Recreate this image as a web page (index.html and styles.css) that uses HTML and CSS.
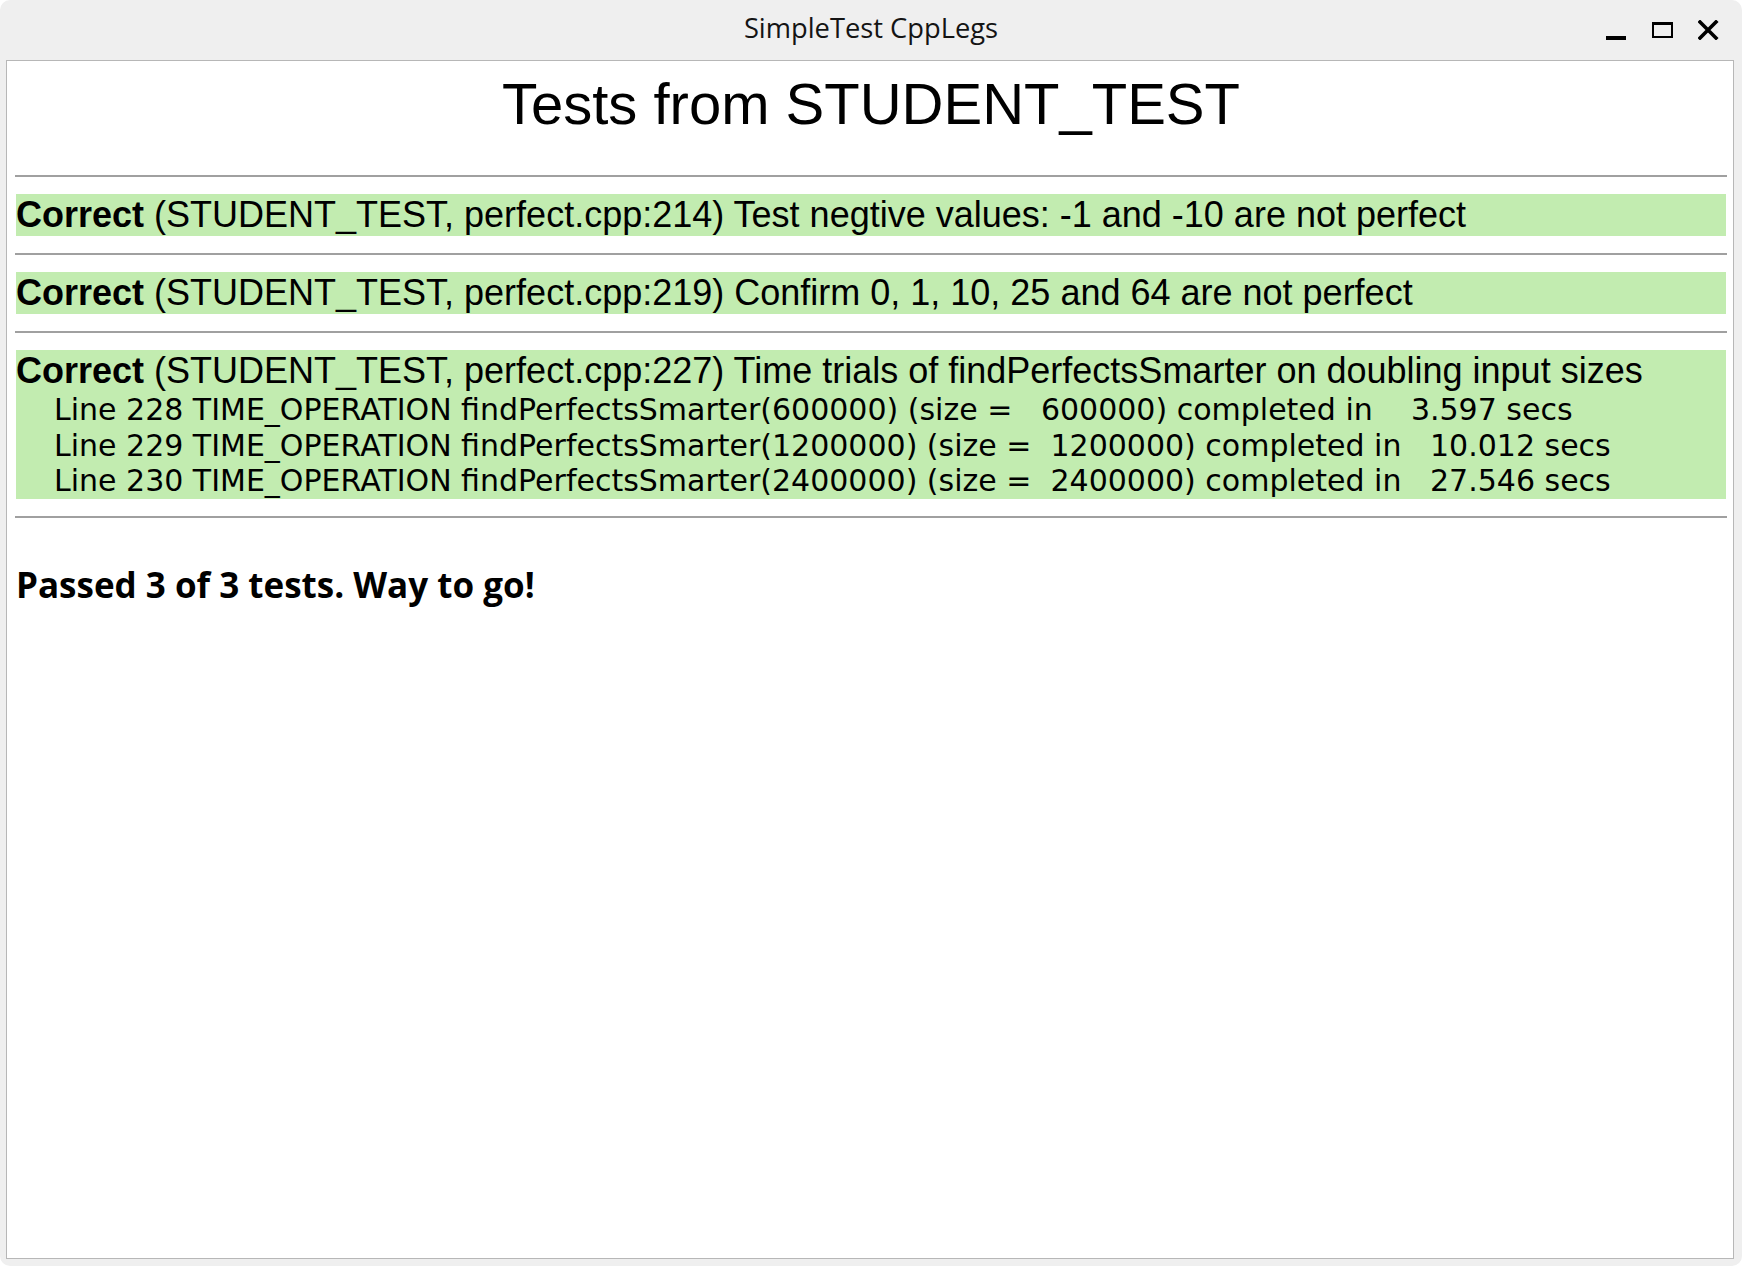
FILE: index.html
```html
<!DOCTYPE html>
<html lang="en">
<head>
<meta charset="utf-8">
<title>SimpleTest CppLegs</title>
<link rel="stylesheet" href="styles.css">
</head>
<body>
<div class="window">
  <header class="titlebar">
    <div class="spacer"></div>
    <div class="title">SimpleTest CppLegs</div>
    <div class="controls">
      <svg class="ctl" width="21" height="20" viewBox="0 0 21 20" aria-label="Minimize"><rect x="0" y="16" width="20" height="4" fill="#000"/></svg>
      <svg class="ctl" width="21" height="20" viewBox="0 0 21 20" aria-label="Maximize"><path d="M0 2h21v16H0z M2 5v11h17V5z" fill="#000" fill-rule="evenodd"/></svg>
      <svg class="ctl" width="21" height="20" viewBox="0 0 21 20" aria-label="Close"><path d="M2 2L18 18M18 2L2 18" stroke="#000" stroke-width="3.6" stroke-linecap="square" fill="none"/></svg>
    </div>
  </header>
  <main class="panel">
    <h1 class="heading">Tests from STUDENT_TEST</h1>
    <hr class="rule">
    <div class="result"><b>Correct</b> (STUDENT_TEST, perfect.cpp:214) Test negtive values: -1 and -10 are not perfect</div>
    <hr class="rule">
    <div class="result"><b>Correct</b> (STUDENT_TEST, perfect.cpp:219) Confirm 0, 1, 10, 25 and 64 are not perfect</div>
    <hr class="rule">
    <div class="result">
      <div class="result-head"><b>Correct</b> (STUDENT_TEST, perfect.cpp:227) Time trials of findPerfectsSmarter on doubling input sizes</div>
      <div class="detail">Line 228 TIME_OPERATION findPerfectsSmarter(600000) (size =   600000) completed in    3.597 secs</div>
      <div class="detail">Line 229 TIME_OPERATION findPerfectsSmarter(1200000) (size =  1200000) completed in   10.012 secs</div>
      <div class="detail">Line 230 TIME_OPERATION findPerfectsSmarter(2400000) (size =  2400000) completed in   27.546 secs</div>
    </div>
    <hr class="rule">
    <p class="verdict">Passed 3 of 3 tests. Way to go!</p>
  </main>
</div>
</body>
</html>
```

FILE: styles.css
```css
html, body {
  margin: 0;
  padding: 0;
  background: #ffffff;
}

.window {
  width: 1742px;
  height: 1266px;
  background: #efefef;
  border-radius: 10px;
  display: flex;
  flex-direction: column;
  box-sizing: border-box;
  overflow: hidden;
}

.titlebar {
  height: 60px;
  flex: none;
  display: grid;
  grid-template-columns: 1fr auto 1fr;
}

.title {
  font-family: "Open Sans", "Noto Sans", sans-serif;
  font-size: 27.3px;
  line-height: 37px;
  padding-top: 9px;
  color: #141414;
  white-space: nowrap;
}

.controls {
  display: flex;
  justify-content: flex-end;
  align-items: flex-start;
  padding-top: 20px;
  padding-right: 23px;
}

.ctl {
  display: block;
  margin-left: 25px;
}

.panel {
  flex: 1;
  margin: 0 8px 7px 6px;
  border: 1px solid #b7b7b7;
  background: #ffffff;
  padding: 0 6px 0 8px;
  font-family: "Liberation Sans", Arial, sans-serif;
  color: #000;
}

.heading {
  margin: 10px 0 38px 0;
  font-family: "Liberation Sans", Arial, sans-serif;
  font-weight: normal;
  font-size: 58px;
  line-height: 66px;
  text-align: center;
}

.rule {
  margin: 17px 0;
  height: 2px;
  border: none;
  background: #a0a0a0;
}

.result {
  margin: 0 1px;
  background: #c2ecb0;
  font-size: 36px;
  line-height: 42px;
  white-space: nowrap;
}

.result b {
  font-weight: bold;
}

.detail {
  font-family: "DejaVu Sans", "Open Sans", sans-serif;
  font-size: 30px;
  line-height: 35.7px;
  padding-left: 38px;
  white-space: pre;
}

.verdict {
  margin: 47px 0 0 1px;
  font-family: "Open Sans", "Noto Sans", sans-serif;
  font-weight: bold;
  font-size: 35px;
  line-height: 40px;
}
```
